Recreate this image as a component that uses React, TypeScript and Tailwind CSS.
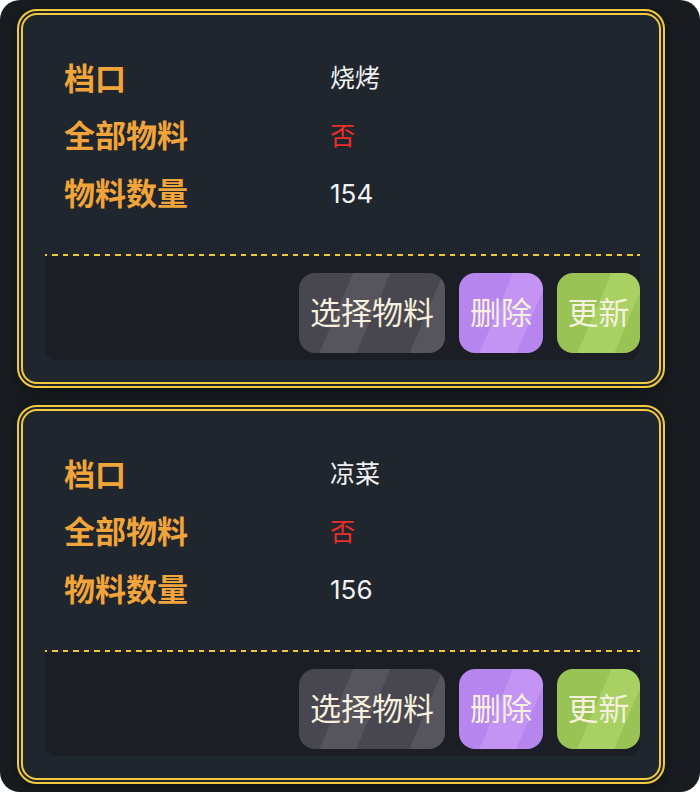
import React from "react";

type Item = { stall: string; all: string; count: string };

const items: Item[] = [
  { stall: "烧烤", all: "否", count: "154" },
  { stall: "凉菜", all: "否", count: "156" },
];

const font = { fontFamily: 'Inter, "Noto Sans CJK SC", "Noto Sans", sans-serif' };

function Card({ item }: { item: Item }) {
  return (
    <div className="w-[648px] rounded-[20px] border-[6px] border-double border-[#f3ca3b] bg-[#20262d] pt-[35px] pb-[22px] pl-[22px] pr-[19px] shadow-[0_4px_14px_rgba(0,0,0,0.35)]">
      <div className="flex flex-col pl-[19px]">
        <div className="flex h-[57.5px] items-center">
          <div className="w-[266px] text-[31px] font-bold text-[#f1a43a]">档口</div>
          <div className="text-[25px] font-normal text-[#f2f2f2]">{item.stall}</div>
        </div>
        <div className="flex h-[57.5px] items-center">
          <div className="w-[266px] text-[31px] font-bold text-[#f1a43a]">全部物料</div>
          <div className="text-[25px] font-normal text-[#ea2f28]">{item.all}</div>
        </div>
        <div className="flex h-[57.5px] items-center">
          <div className="w-[266px] text-[31px] font-bold text-[#f1a43a]">物料数量</div>
          <div className="text-[26px] font-normal text-[#f2f2f2]">{item.count}</div>
        </div>
      </div>
      <div className="mt-[31.5px] h-[2px] bg-[repeating-linear-gradient(90deg,#f0c83a_0px,#f0c83a_5.5px,transparent_5.5px,transparent_10.45px)] bg-[position:-3px_0]" />
      <div className="flex justify-end gap-[14px] rounded-b-[12px] bg-[#1b1f25] pt-[17px] pb-[7px]">
        <button className="flex h-[80px] w-[146px] items-center justify-center rounded-[16px] bg-[repeating-linear-gradient(113deg,#56545c_0px,#56545c_1px,#48464e_1px,#48464e_50px,#56545c_50px,#56545c_83px)] text-[31px] font-normal text-[#f6f1de]">
          选择物料
        </button>
        <button className="flex h-[80px] w-[84px] items-center justify-center rounded-[16px] bg-[repeating-linear-gradient(113deg,#c394f3_0px,#c394f3_1px,#b686ee_1px,#b686ee_50px,#c394f3_50px,#c394f3_83px)] text-[31px] font-normal text-[#f6f1de]">
          删除
        </button>
        <button className="flex h-[80px] w-[83px] items-center justify-center rounded-[16px] bg-[repeating-linear-gradient(113deg,#a8d063_0px,#a8d063_1px,#99c455_1px,#99c455_50px,#a8d063_50px,#a8d063_83px)] text-[31px] font-normal text-[#f6f1de]">
          更新
        </button>
      </div>
    </div>
  );
}

export default function App() {
  return (
    <div className="w-[700px] bg-white" style={font}>
      <div className="flex h-[792px] w-[700px] flex-col gap-[17px] rounded-[20px] bg-[#181c20] pt-[9px] pl-[17px]">
        {items.map((it, i) => (
          <Card key={i} item={it} />
        ))}
      </div>
    </div>
  );
}
